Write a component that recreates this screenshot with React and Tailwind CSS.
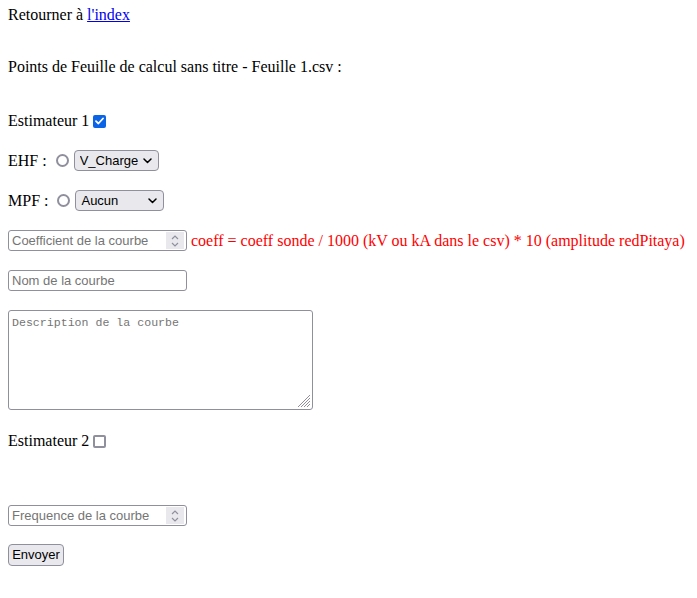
import React from "react";

const ctl = "font-['Liberation_Sans',Arial,sans-serif] text-[13px] text-black";

function Chevron() {
  return (
    <svg width="9" height="6" viewBox="0 0 9 6" className="pointer-events-none absolute right-[7px] top-[8px]">
      <path d="M1 1l3.5 3.5L8 1" fill="none" stroke="#000" strokeWidth="1.5" strokeLinecap="round" strokeLinejoin="round" />
    </svg>
  );
}

function Select({ value, width, options }) {
  return (
    <div className={`relative h-[21px] ${width}`}>
      <select
        defaultValue={value}
        className={`${ctl} h-full w-full appearance-none rounded-[4px] border border-[#8f8f9d] bg-[#e9e9ed] pl-[5px] pr-[18px] leading-[19px] outline-none`}
      >
        {options.map((o) => (
          <option key={o}>{o}</option>
        ))}
      </select>
      <Chevron />
    </div>
  );
}

function Spinner() {
  return (
    <span className="mr-[2px] flex h-[17px] w-[18px] shrink-0 flex-col items-center justify-center gap-[2px] bg-[#e9e9ed]">
      <svg width="8" height="5" viewBox="0 0 8 5">
        <path d="M1 4l3-3 3 3" fill="none" stroke="#8f8f9d" strokeWidth="1.2" />
      </svg>
      <svg width="8" height="5" viewBox="0 0 8 5">
        <path d="M1 1l3 3 3-3" fill="none" stroke="#8f8f9d" strokeWidth="1.2" />
      </svg>
    </span>
  );
}

function NumberInput({ placeholder }) {
  return (
    <div className="flex h-[21px] w-[179px] shrink-0 items-center rounded-[3px] border border-[#8f8f9d] bg-white">
      <input
        type="text"
        placeholder={placeholder}
        className={`${ctl} min-w-0 flex-1 bg-transparent pl-[3px] outline-none placeholder:text-[#757575]`}
      />
      <Spinner />
    </div>
  );
}

function Radio() {
  return <span className="block h-[13px] w-[13px] shrink-0 rounded-full border-2 border-[#8f8f9d] bg-white" />;
}

function Checkbox({ checked }) {
  if (checked) {
    return (
      <span className="flex h-[13px] w-[13px] shrink-0 items-center justify-center rounded-[2px] bg-[#0b63e5]">
        <svg width="9" height="8" viewBox="0 0 9 8">
          <path d="M1 4.2l2.4 2.3L8 1.5" fill="none" stroke="#fff" strokeWidth="1.8" strokeLinecap="round" strokeLinejoin="round" />
        </svg>
      </span>
    );
  }
  return <span className="block h-[13px] w-[13px] shrink-0 rounded-[2px] border-2 border-[#8f8f9d] bg-white" />;
}

export default function App() {
  return (
    <div className="min-h-[598px] bg-white px-2 font-['Liberation_Serif','Times_New_Roman',serif] text-[16px] text-black">
      <div className="flex flex-col">
        <div className="mt-[6px] h-[18px] leading-[18px]">
          Retourner à{" "}
          <a href="#" className="text-[#0000ee] underline">
            l'index
          </a>
        </div>

        <div className="mt-[34px] h-[18px] leading-[18px]">Points de Feuille de calcul sans titre - Feuille 1.csv :</div>

        <div className="mt-[36px] flex h-[18px] items-center leading-[18px]">
          <span>Estimateur 1</span>
          <span className="ml-[4px]">
            <Checkbox checked />
          </span>
        </div>

        <div className="mt-[20px] flex h-[21px] items-center leading-[18px]">
          <span>EHF :</span>
          <span className="ml-[9px]">
            <Radio />
          </span>
          <span className="ml-[5px]">
            <Select value="V_Charge" width="w-[85px]" options={["V_Charge"]} />
          </span>
        </div>

        <div className="mt-[19px] flex h-[21px] items-center leading-[18px]">
          <span>MPF :</span>
          <span className="ml-[9px]">
            <Radio />
          </span>
          <span className="ml-[5px]">
            <Select value="Aucun" width="w-[89px]" options={["Aucun"]} />
          </span>
        </div>

        <div className="mt-[19px] flex h-[21px] items-center whitespace-nowrap leading-[18px]">
          <NumberInput placeholder="Coefficient de la courbe" />
          <span className="ml-[4px] text-[#ff0000]">
            coeff = coeff sonde / 1000 (kV ou kA dans le csv) * 10 (amplitude redPitaya)
          </span>
        </div>

        <div className="mt-[19px] flex h-[21px] items-center">
          <input
            type="text"
            placeholder="Nom de la courbe"
            className={`${ctl} h-[21px] w-[179px] rounded-[3px] border border-[#8f8f9d] bg-white pl-[3px] outline-none placeholder:text-[#757575]`}
          />
        </div>

        <div className="relative mt-[19px] h-[100px] w-[305px]">
          <textarea
            placeholder="Description de la courbe"
            className="h-full w-full resize-none rounded-[3px] border border-[#8f8f9d] bg-white px-[3px] pt-[4px] font-['Liberation_Mono','Courier_New',monospace] text-[11.6px] leading-[15px] outline-none placeholder:text-[#757575]"
          />
          <svg width="14" height="14" viewBox="0 0 14 14" className="pointer-events-none absolute bottom-[2px] right-[2px]">
            <g stroke="#8f8f9d" strokeWidth="1">
              <path d="M13 1L1 13" />
              <path d="M13 4L4 13" />
              <path d="M13 7L7 13" />
              <path d="M13 10L10 13" />
            </g>
          </svg>
        </div>

        <div className="mt-[22px] flex h-[18px] items-center leading-[18px]">
          <span>Estimateur 2</span>
          <span className="ml-[4px]">
            <Checkbox />
          </span>
        </div>

        <div className="mt-[55px] flex h-[21px] items-center">
          <NumberInput placeholder="Frequence de la courbe" />
        </div>

        <div className="mt-[18px] flex">
          <button
            type="button"
            className={`${ctl} h-[22px] w-[56px] rounded-[4px] border border-[#8f8f9d] bg-[#e9e9ed] leading-[20px]`}
          >
            Envoyer
          </button>
        </div>
      </div>
    </div>
  );
}
